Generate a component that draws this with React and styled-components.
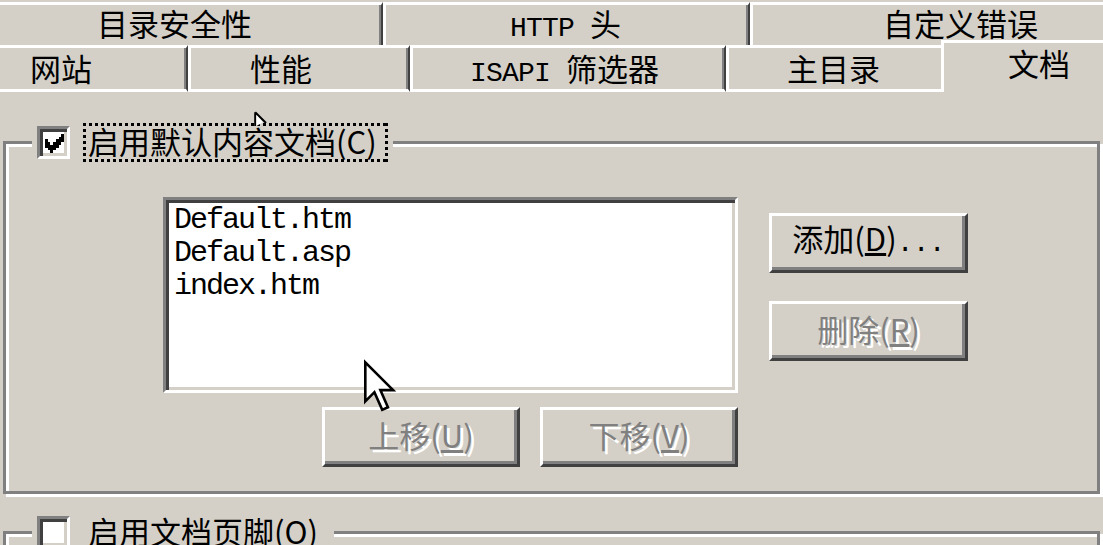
import React from 'react';
import styled, { createGlobalStyle } from 'styled-components';

const CJK = `"Noto Sans CJK SC", "Noto Sans", sans-serif`;
const MONO = `"Liberation Mono", "Noto Sans CJK SC", monospace`;

const GlobalStyle = createGlobalStyle`
  body {
    margin: 0;
    background: #d4d0c8;
    font-family: ${CJK};
  }
`;

const topTabs = [
  { label: '目录安全性', width: 383, pad: 97, noLeft: true },
  { label: <><Mono>HTTP </Mono>头</>, width: 367, pad: 124 },
  { label: '自定义错误', width: 420, pad: 130, noRight: true },
];

const bottomTabs = [
  { label: '网站', width: 188, pad: 30, noLeft: true },
  { label: '性能', width: 222, pad: 59 },
  { label: <><Mono>ISAPI </Mono>筛选器</>, width: 316, pad: 57 },
  { label: '主目录', width: 215, pad: 58, noRight: true },
  { label: '文档', width: 240, pad: 64, selected: true },
];

const docs = ['Default.htm', 'Default.asp', 'index.htm'];

function Mono({ children }) {
  return <MonoText>{children}</MonoText>;
}

const CheckMark = () => (
  <svg width="19" height="19" viewBox="0 0 7 7" shapeRendering="crispEdges">
    <rect x="0" y="2" width="1" height="3" fill="#000" />
    <rect x="1" y="3" width="1" height="3" fill="#000" />
    <rect x="2" y="4" width="1" height="3" fill="#000" />
    <rect x="3" y="3" width="1" height="3" fill="#000" />
    <rect x="4" y="2" width="1" height="3" fill="#000" />
    <rect x="5" y="1" width="1" height="3" fill="#000" />
    <rect x="6" y="0" width="1" height="3" fill="#000" />
  </svg>
);

const App = () => {
  return (
    <>
      <GlobalStyle />
      <Page>
        <TabRow $top>
          {topTabs.map((t, i) => (
            <Tab key={i} $row="top" $w={t.width} $pad={t.pad} $noLeft={t.noLeft} $noRight={t.noRight}>
              {t.label}
            </Tab>
          ))}
        </TabRow>
        <TabRow>
          {bottomTabs.map((t, i) => (
            <Tab
              key={i}
              $row="bottom"
              $w={t.width}
              $pad={t.pad}
              $noLeft={t.noLeft}
              $noRight={t.noRight || t.selected}
              $selected={t.selected}
            >
              {t.label}
            </Tab>
          ))}
        </TabRow>

        <Frame $top={49} $h={353}>
          <Legend>
            <CheckBox>
              <CheckMark />
            </CheckBox>
            <CheckLabel $focus>
              启用默认内容文档(<u>C</u>)
            </CheckLabel>
          </Legend>
          <GroupBody>
            <ListColumn>
              <ListBox>
                {docs.map((d) => (
                  <ListItem key={d}>{d}</ListItem>
                ))}
              </ListBox>
              <MoveRow>
                <Button $w={198} disabled>
                  上移(<u>U</u>)
                </Button>
                <Button $w={198} disabled>
                  下移(<u>V</u>)
                </Button>
              </MoveRow>
            </ListColumn>
            <SideButtons>
              <Button $w={199}>
                添加(<u>D</u>)<Mono>...</Mono>
              </Button>
              <Button $w={199} disabled>
                删除(<u>R</u>)
              </Button>
            </SideButtons>
          </GroupBody>
        </Frame>

        <Frame $top={37} $h={120}>
          <Legend>
            <CheckBox />
            <CheckLabel>启用文档页脚(O)</CheckLabel>
          </Legend>
        </Frame>

        <Pointer style={{ left: 364, top: 361 }} width="32" height="52" viewBox="0 0 12.3 20">
          <path
            d="M0.5 0.5 L0.5 15.5 L4 12 L7 18.8 L9.2 17.8 L6.3 11.2 L11.2 11.2 Z"
            fill="#fff"
            stroke="#000"
            strokeWidth="1"
            strokeLinejoin="miter"
          />
        </Pointer>
        <Pointer style={{ left: 254, top: 111 }} width="14" height="16" viewBox="0 0 7 8">
          <path d="M0.6 0.6 L0.6 7.5 M0.6 0.6 L6 6" fill="none" stroke="#000" strokeWidth="1" />
          <path d="M1.2 2 L1.2 7.5 L4.5 5.6 Z" fill="#fff" />
        </Pointer>
      </Page>
    </>
  );
};

const Page = styled.div`
  position: relative;
  width: 1103px;
  height: 545px;
  overflow: hidden;
  background: #d4d0c8;
  font-family: ${CJK};
  font-size: 31px;
  color: #000;
`;

const MonoText = styled.span`
  font-family: ${MONO};
  font-size: 28px;
  letter-spacing: -0.8px;
  white-space: pre;
`;

const TabRow = styled.div`
  display: flex;
  box-sizing: border-box;
  height: ${(p) => (p.$top ? 45 : 47)}px;
  padding-top: ${(p) => (p.$top ? 2 : 0)}px;
  white-space: nowrap;
`;

const Tab = styled.div`
  box-sizing: border-box;
  flex: none;
  position: relative;
  width: ${(p) => p.$w}px;
  height: ${(p) => (p.$row === 'top' ? 43 : p.$selected ? 52 : 47)}px;
  margin-top: ${(p) => (p.$selected ? -5 : 0)}px;
  z-index: ${(p) => (p.$selected ? 1 : 0)};
  padding-left: ${(p) => p.$pad}px;
  background: #d4d0c8;
  border-top: 3px solid #fff;
  border-left: ${(p) => (p.$noLeft ? 'none' : '3px solid #fff')};
  border-right: ${(p) => (p.$noRight ? 'none' : '2px solid #404040')};
  border-bottom: ${(p) => (p.$row === 'bottom' && !p.$selected ? '3px solid #fff' : 'none')};
  box-shadow: ${(p) => (p.$noRight ? 'none' : 'inset -2px 0 0 #808080')};
  line-height: ${(p) => (p.$row === 'top' ? 36 : 40)}px;
`;

const Frame = styled.div`
  box-sizing: border-box;
  width: 1097px;
  height: ${(p) => p.$h}px;
  margin: ${(p) => p.$top}px 0 0 3px;
  border: 3px solid #808080;
  box-shadow: inset 3px 3px 0 #fff, 3px 3px 0 #fff;
`;

const Legend = styled.div`
  display: flex;
  align-items: center;
  gap: 13px;
  width: fit-content;
  margin: -21px 0 0 26px;
  padding: 0 5px;
  background: #d4d0c8;
`;

const CheckBox = styled.div`
  box-sizing: border-box;
  display: flex;
  align-items: center;
  justify-content: center;
  width: 33px;
  height: 33px;
  background: #fff;
  border: 3px solid;
  border-color: #808080 #fff #fff #808080;
  box-shadow: inset 3px 3px 0 #404040, inset -3px -3px 0 #d4d0c8;
  padding: 2px 0 0 2px;
`;

const dotsH = 'repeating-linear-gradient(90deg, #000 0 3px, transparent 3px 6px)';
const dotsV = 'repeating-linear-gradient(180deg, #000 0 3px, transparent 3px 6px)';

const CheckLabel = styled.div`
  box-sizing: border-box;
  height: 39px;
  padding: 0 8px 3px 2px;
  border: 3px solid transparent;
  line-height: 30px;
  white-space: nowrap;
  background: ${(p) =>
    p.$focus
      ? `${dotsH} top left / 100% 3px no-repeat border-box,
         ${dotsH} bottom left / 100% 3px no-repeat border-box,
         ${dotsV} top left / 3px 100% no-repeat border-box,
         ${dotsV} top right / 3px 100% no-repeat border-box`
      : 'none'};

  u {
    text-decoration: none;
  }
`;

const GroupBody = styled.div`
  display: flex;
  margin: 35px 0 0 157px;
`;

const ListColumn = styled.div`
  display: flex;
  flex-direction: column;
`;

const ListBox = styled.div`
  box-sizing: border-box;
  width: 575px;
  height: 196px;
  padding: 4px 0 0 8px;
  background: #fff;
  border: 3px solid;
  border-color: #808080 #fff #fff #808080;
  box-shadow: inset 3px 3px 0 #404040, inset -3px -3px 0 #d4d0c8;
`;

const ListItem = styled.div`
  font-family: ${MONO};
  font-size: 30px;
  letter-spacing: -2px;
  line-height: 33px;
  color: #000;
`;

const MoveRow = styled.div`
  display: flex;
  justify-content: flex-end;
  gap: 20px;
  margin-top: 14px;
`;

const SideButtons = styled.div`
  display: flex;
  flex-direction: column;
  gap: 28px;
  margin-left: 31px;
  padding-top: 16px;
`;

const Button = styled.button`
  box-sizing: border-box;
  width: ${(p) => p.$w}px;
  height: 60px;
  padding: 0 0 4px;
  background: #d4d0c8;
  border: 3px solid;
  border-color: #fff #404040 #404040 #fff;
  box-shadow: inset -3px -3px 0 #808080;
  font-family: ${CJK};
  font-size: 31px;
  line-height: 40px;
  color: #000;
  white-space: nowrap;

  &:disabled {
    color: #808080;
    text-shadow: 3px 3px 0 #fff;
  }
`;

const Pointer = styled.svg`
  position: absolute;
  z-index: 5;
  overflow: visible;
`;

export default App;
